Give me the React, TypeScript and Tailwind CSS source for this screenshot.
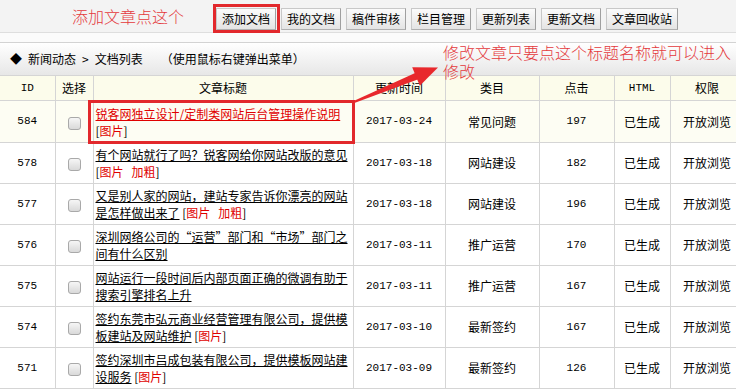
import React from "react";

type Row = {
  id: string;
  title: string;
  tags: string[];
  date: string;
  cat: string;
  hits: string;
  active?: boolean;
};

const rows: Row[] = [
  { id: "584", title: "锐客网独立设计/定制类网站后台管理操作说明", tags: ["图片"], date: "2017-03-24", cat: "常见问题", hits: "197", active: true },
  { id: "578", title: "有个网站就行了吗？锐客网给你网站改版的意见", tags: ["图片", "加粗"], date: "2017-03-18", cat: "网站建设", hits: "182" },
  { id: "577", title: "又是别人家的网站，建站专家告诉你漂亮的网站是怎样做出来了", tags: ["图片", "加粗"], date: "2017-03-18", cat: "网站建设", hits: "196" },
  { id: "576", title: "深圳网络公司的“运营”部门和“市场”部门之间有什么区别", tags: [], date: "2017-03-11", cat: "推广运营", hits: "170" },
  { id: "575", title: "网站运行一段时间后内部页面正确的微调有助于搜索引擎排名上升", tags: [], date: "2017-03-11", cat: "推广运营", hits: "167" },
  { id: "574", title: "签约东莞市弘元商业经营管理有限公司，提供模板建站及网站维护", tags: ["图片"], date: "2017-03-10", cat: "最新签约", hits: "167" },
  { id: "571", title: "签约深圳市吕成包装有限公司，提供模板网站建设服务", tags: ["图片"], date: "2017-03-09", cat: "最新签约", hits: "126" },
];

const buttons = ["添加文档", "我的文档", "稿件审核", "栏目管理", "更新列表", "更新文档", "文章回收站"];

const cell = "border border-[#d5d5d5] text-center align-middle p-0";
const mono = "font-['Liberation_Mono','Noto_Sans_CJK_SC',monospace] text-[11px]";

function Checkbox() {
  return (
    <span className="inline-block w-[13px] h-[13px] rounded-[3px] border border-[#a9a9a9] bg-gradient-to-b from-[#f6f6f6] to-[#d9d9d9] align-middle" />
  );
}

export default function App() {
  return (
    <div className="relative w-[736px] h-[389px] overflow-hidden bg-[#fbfbfb] text-[12px] text-black font-['Noto_Sans_CJK_SC',sans-serif]">
      {/* top toolbar */}
      <div className="h-[33px] bg-[#f3f3f3] border-b border-[#dedede] flex items-center">
        <span className="ml-[72px] w-[144px] text-[16px] leading-[20px] text-[#e4393c] font-light">添加文章点这个</span>
        <div className="flex gap-[5px] pt-[5px]">
          {buttons.map((b) => (
            <span
              key={b}
              className="h-[22px] px-[5px] flex items-center justify-center border border-[#c8c8c8] border-r-[#9f9f9f] border-b-[#b0b0b0] bg-gradient-to-b from-[#fbfbfb] to-[#e4e4e4] text-[12px] leading-none whitespace-nowrap"
            >
              {b}
            </span>
          ))}
        </div>
      </div>

      {/* breadcrumb */}
      <div className="mt-[9px] h-[33px] border-t border-[#d3d3d3] bg-gradient-to-b from-[#ffffff] to-[#e7e7e7] flex items-center pl-[10px] text-[12px]">
        <span className="text-[12px] w-[18px]">◆</span>
        <span>新闻动态</span>
        <span className="mx-[6px]">&gt;</span>
        <span>文档列表</span>
        <span className="ml-[18px]">（使用鼠标右键弹出菜单）</span>
      </div>

      {/* table */}
      <table className="table-fixed border-collapse w-[744px] bg-white">
        <colgroup>
          <col className="w-[55px]" />
          <col className="w-[38px]" />
          <col className="w-[260px]" />
          <col className="w-[92px]" />
          <col className="w-[94px]" />
          <col className="w-[75px]" />
          <col className="w-[56px]" />
          <col className="w-[74px]" />
        </colgroup>
        <thead>
          <tr className="h-[25px] bg-[#fcfceb]">
            <th className={`${cell} border-l-0 font-normal ${mono}`}>ID</th>
            <th className={`${cell} font-normal`}>选择</th>
            <th className={`${cell} font-normal`}>文章标题</th>
            <th className={`${cell} font-normal`}>更新时间</th>
            <th className={`${cell} font-normal`}>类目</th>
            <th className={`${cell} font-normal`}>点击</th>
            <th className={`${cell} font-normal ${mono}`}>HTML</th>
            <th className={`${cell} font-normal`}>权限</th>
          </tr>
        </thead>
        <tbody>
          {rows.map((r, i) => (
            <tr key={r.id} className={`${i === 0 ? "h-[42px] bg-[#fdfdf3]" : "h-[41px]"}`}>
              <td className={`${cell} border-l-0 ${mono}`}>{r.id}</td>
              <td className={cell}>
                <Checkbox />
              </td>
              <td className={`${cell} text-left pl-[2px] pr-[2px] leading-[17px]`}>
                <a className={`underline ${r.active ? "text-[#e00000]" : "text-black"}`}>{r.title}</a>
                {r.tags.length > 0 && (
                  <>
                    {" "}
                    [
                    {r.tags.map((t, k) => (
                      <React.Fragment key={t}>
                        {k > 0 && <span className="inline-block w-[8px]" />}
                        <span className="text-[#e00000]">{t}</span>
                      </React.Fragment>
                    ))}
                    ]
                  </>
                )}
              </td>
              <td className={`${cell} ${mono}`}>{r.date}</td>
              <td className={cell}>{r.cat}</td>
              <td className={`${cell} ${mono}`}>{r.hits}</td>
              <td className={cell}>已生成</td>
              <td className={cell}>开放浏览</td>
            </tr>
          ))}
        </tbody>
      </table>

      {/* annotations */}
      <div className="absolute left-[213px] top-[4px] w-[67px] h-[29px] border-[3px] border-[#e2282c]" />
      <div className="absolute left-[88px] top-[100px] w-[267px] h-[44px] border-[3px] border-[#e2282c]" />
      <div className="absolute left-[443px] top-[43px] w-[292px] text-[16px] leading-[19px] text-[#e4393c] font-light">
        修改文章只要点这个标题名称就可以进入修改
      </div>
      <svg className="absolute left-0 top-0 pointer-events-none" width="736" height="389" viewBox="0 0 736 389">
        <polygon points="353.6,101.1 354.4,102.9 418.3,79.2 415.7,72.8" fill="#e8282c" />
        <polygon points="438,67.5 412.2,67.25 419.8,85.75" fill="#e8282c" />
      </svg>
    </div>
  );
}
